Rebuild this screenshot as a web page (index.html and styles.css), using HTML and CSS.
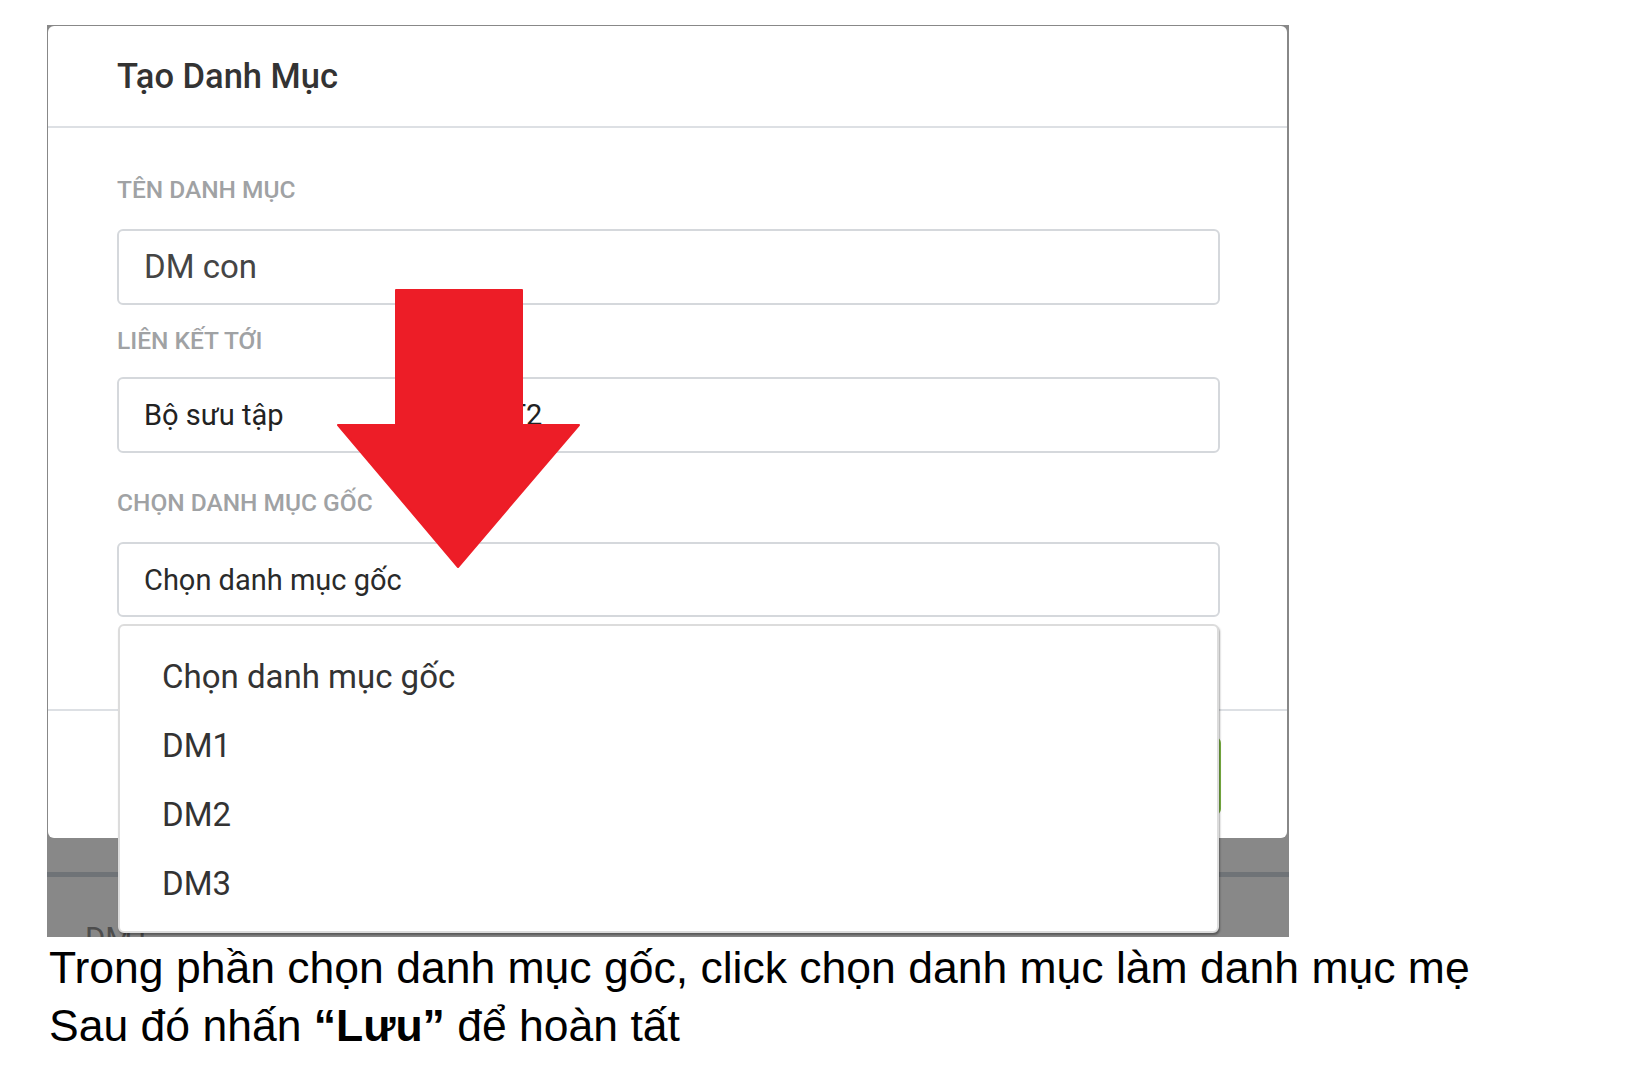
FILE: index.html
```html
<!DOCTYPE html>
<html lang="vi">
<head>
<meta charset="utf-8">
<title>Tạo Danh Mục</title>
<link rel="stylesheet" href="styles.css">
</head>
<body>
<div class="frame">
  <div class="modal">
    <div class="modal-header"><h1 class="modal-title">Tạo Danh Mục</h1></div>
    <div class="modal-body">
      <div class="field-label lbl-1">TÊN DANH MỤC</div>
      <div class="input input-1">DM con</div>
      <div class="field-label lbl-2">LIÊN KẾT TỚI</div>
      <div class="input input-2"><span>Bộ sưu tập</span><span class="hidden-part">BST2</span></div>
      <div class="field-label lbl-3">CHỌN DANH MỤC GỐC</div>
      <div class="input input-3">Chọn danh mục gốc</div>
    </div>
    <div class="modal-footer"><button class="btn-save">Lưu</button></div>
  </div>
  <div class="page-behind">
    <div class="behind-rule"></div>
    <div class="behind-text">DM1</div>
  </div>
  <ul class="dropdown">
    <li>Chọn danh mục gốc</li>
    <li>DM1</li>
    <li>DM2</li>
    <li>DM3</li>
  </ul>
  <svg class="arrow" width="260" height="295" viewBox="0 0 260 295">
    <polygon points="66,8 192,8 192,143 249,143 128,285 8,143 66,143" fill="#ed1d27" stroke="#ed1d27" stroke-width="2" stroke-linejoin="round"/>
  </svg>
</div>
<p class="caption">Trong phần chọn danh mục gốc, click chọn danh mục làm danh mục mẹ<br>Sau đó nhấn <b>“Lưu”</b> để hoàn tất</p>
</body>
</html>
```
FILE: styles.css
```css
html, body {
  margin: 0;
  padding: 0;
  background: #fff;
}

.frame {
  position: relative;
  margin: 25px 0 0 47px;
  width: 1242px;
  height: 912px;
  background: #888;
  overflow: hidden;
  font-family: Roboto, "Noto Sans", sans-serif;
}

.modal {
  margin: 1px 2px 0 1px;
  height: 812px;
  background: #fff;
  border-radius: 6px;
  display: flex;
  flex-direction: column;
}

.modal-header {
  height: 100px;
  border-bottom: 2px solid #dde0e4;
  padding-left: 69px;
  display: flex;
  align-items: center;
}

.modal-title {
  margin: 0;
  font-size: 34.5px;
  font-weight: 500;
  color: #333;
  line-height: 40px;
}

.modal-body {
  height: 581px;
  box-sizing: border-box;
  padding: 49px 67px 0 69px;
}

.field-label {
  font-size: 24.5px;
  line-height: 26px;
  font-weight: 500;
  color: #a0a2a4;
}

.lbl-2 { margin-top: 23px; }
.lbl-3 { margin-top: 37px; }

.input {
  box-sizing: border-box;
  height: 76px;
  border: 2px solid #d5d8dc;
  border-radius: 6px;
  padding-left: 25px;
  display: flex;
  align-items: center;
  line-height: 36px;
  font-size: 29px;
  color: #222;
}

.input-1 {
  margin-top: 26px;
  font-size: 33px;
  color: #454545;
}

.input-2 { margin-top: 23px; }

.input-3 {
  margin-top: 26px;
  height: 75px;
  color: #2a2a2a;
}

.hidden-part {
  margin-left: 190px;
}

.modal-footer {
  height: 127px;
  border-top: 2px solid #dde0e4;
  display: flex;
  justify-content: flex-end;
  align-items: flex-start;
  padding: 26px 66px 0 0;
  box-sizing: border-box;
}

.btn-save {
  width: 140px;
  height: 78px;
  border: none;
  border-radius: 6px;
  background: #7cb342;
  color: #fff;
  font-family: Roboto, sans-serif;
  font-size: 28px;
}

.page-behind {
  padding-top: 34px;
}

.behind-rule {
  height: 5px;
  background: #6f7377;
}

.behind-text {
  margin-top: 44px;
  padding-left: 38px;
  font-size: 31px;
  line-height: 36px;
  color: #4d4d4d;
}

.dropdown {
  position: absolute;
  left: 71px;
  top: 599px;
  width: 1101px;
  height: 309px;
  box-sizing: border-box;
  margin: 0;
  padding: 16px 0 0 42px;
  list-style: none;
  background: #fff;
  border: 2px solid #dcdcdc;
  border-radius: 6px;
  box-shadow: 1px 2px 2px rgba(0, 0, 0, 0.35);
}

.dropdown li {
  font-size: 33px;
  line-height: 69px;
  color: #333;
}

.arrow {
  position: absolute;
  left: 283px;
  top: 257px;
}

.caption {
  margin: 2px 0 0 49px;
  font-family: "Liberation Sans", Arial, sans-serif;
  font-size: 44.5px;
  line-height: 58px;
  color: #000;
}

.caption b {
  font-weight: 700;
}
```
